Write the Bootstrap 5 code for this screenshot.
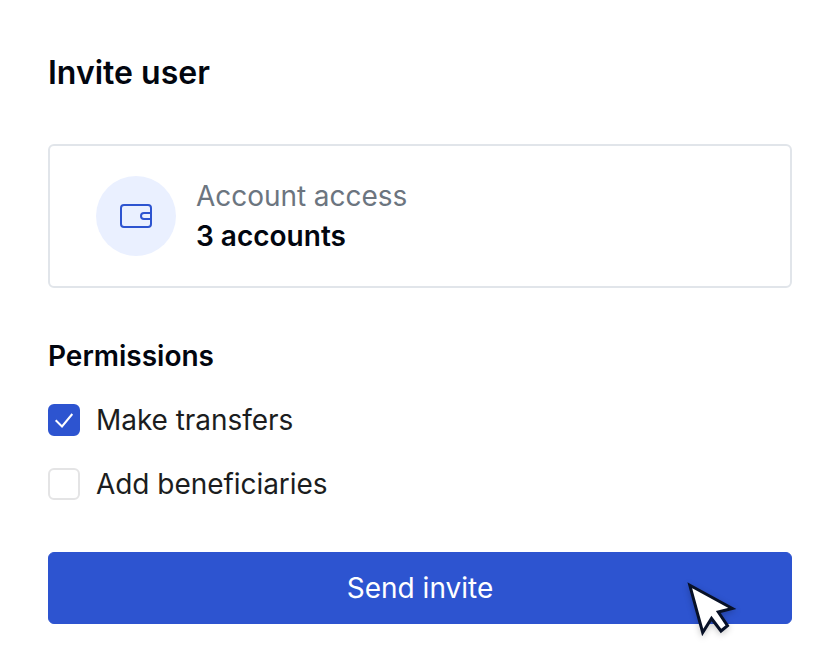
<!DOCTYPE html>
<html lang="en">
<head>
<meta charset="utf-8">
<meta name="viewport" content="width=device-width, initial-scale=1">
<title>Invite user</title>
<link href="https://cdn.jsdelivr.net/npm/bootstrap@5.3.0/dist/css/bootstrap.min.css" rel="stylesheet">
<style>
body{font-family:Inter,sans-serif;font-size:28px;line-height:40px;font-weight:400;letter-spacing:-.05px;color:#1b1d20;background:#fff}
.invite-form{padding:48px 48px 0}
.title-text{font-size:32px;line-height:50px;font-weight:600;letter-spacing:0;color:#02060f;margin-bottom:46px}
.strong-text{font-size:28px;line-height:40px;font-weight:600;letter-spacing:0;color:#02060f}
.access-card{height:144px;border:2px solid #e1e5ea;border-radius:6px;padding:0 46px;gap:20px;margin-bottom:48px}
.icon-disc{width:80px;height:80px;background:#eaf0ff}
.muted-text{color:#6c757f}
.perm-row{gap:16px;height:40px;margin:0;padding:0}
.form-check .form-check-input.perm-box{width:32px;height:32px;margin:0;float:none;border:2px solid #e4e4e5;border-radius:6px}
.form-check .form-check-input.perm-box:checked{background-color:#2d54d0;border-color:#2d54d0;background-image:none}
.tick{left:0;top:4px;pointer-events:none}
.send-btn{height:72px;font-size:28px;line-height:40px;font-weight:400;letter-spacing:0;border-radius:6px;padding:0;--bs-btn-bg:#2d54d0;--bs-btn-border-color:#2d54d0}
.pointer{left:680px;top:576px;filter:drop-shadow(0 2px 3px rgba(0,0,0,.22))}
</style>
<script src="https://cdn.jsdelivr.net/npm/bootstrap@5.3.0/dist/js/bootstrap.bundle.min.js" defer></script>
</head>
<body>
<form class="invite-form">
  <h1 class="title-text">Invite user</h1>
  <div class="card access-card flex-row align-items-center">
    <div class="icon-disc rounded-circle d-flex align-items-center justify-content-center">
      <svg width="32" height="24" viewBox="0 0 32 24" fill="none" stroke="#2d54d0" stroke-width="2"><rect x="1" y="1" width="30" height="22" rx="3"/><path d="M31 9h-7a3 3 0 0 0 0 6h7"/></svg>
    </div>
    <div>
      <div class="muted-text">Account access</div>
      <div class="strong-text">3 accounts</div>
    </div>
  </div>
  <h2 class="strong-text mb-4">Permissions</h2>
  <div class="form-check perm-row d-flex align-items-center position-relative mb-4">
    <input class="form-check-input perm-box" type="checkbox" id="transfers" checked>
    <svg class="tick position-absolute" width="32" height="32" viewBox="0 0 32 32" fill="none" stroke="#fff" stroke-width="2"><path d="M7.7 16.2l6.3 6.3L24.3 10"/></svg>
    <label for="transfers">Make transfers</label>
  </div>
  <div class="form-check perm-row d-flex align-items-center">
    <input class="form-check-input perm-box" type="checkbox" id="beneficiaries">
    <label for="beneficiaries">Add beneficiaries</label>
  </div>
  <button type="button" class="btn btn-primary send-btn w-100 mt-5">Send invite</button>
</form>
<svg class="pointer position-absolute" width="64" height="68" viewBox="680 576 64 68"><path d="M689.8 585.3L732.3 608.5L718.3 612L727.5 625.7L721 631L711.5 618.5L702.7 632.5Z" fill="#fff" stroke="#081127" stroke-width="3"/></svg>
</body>
</html>
